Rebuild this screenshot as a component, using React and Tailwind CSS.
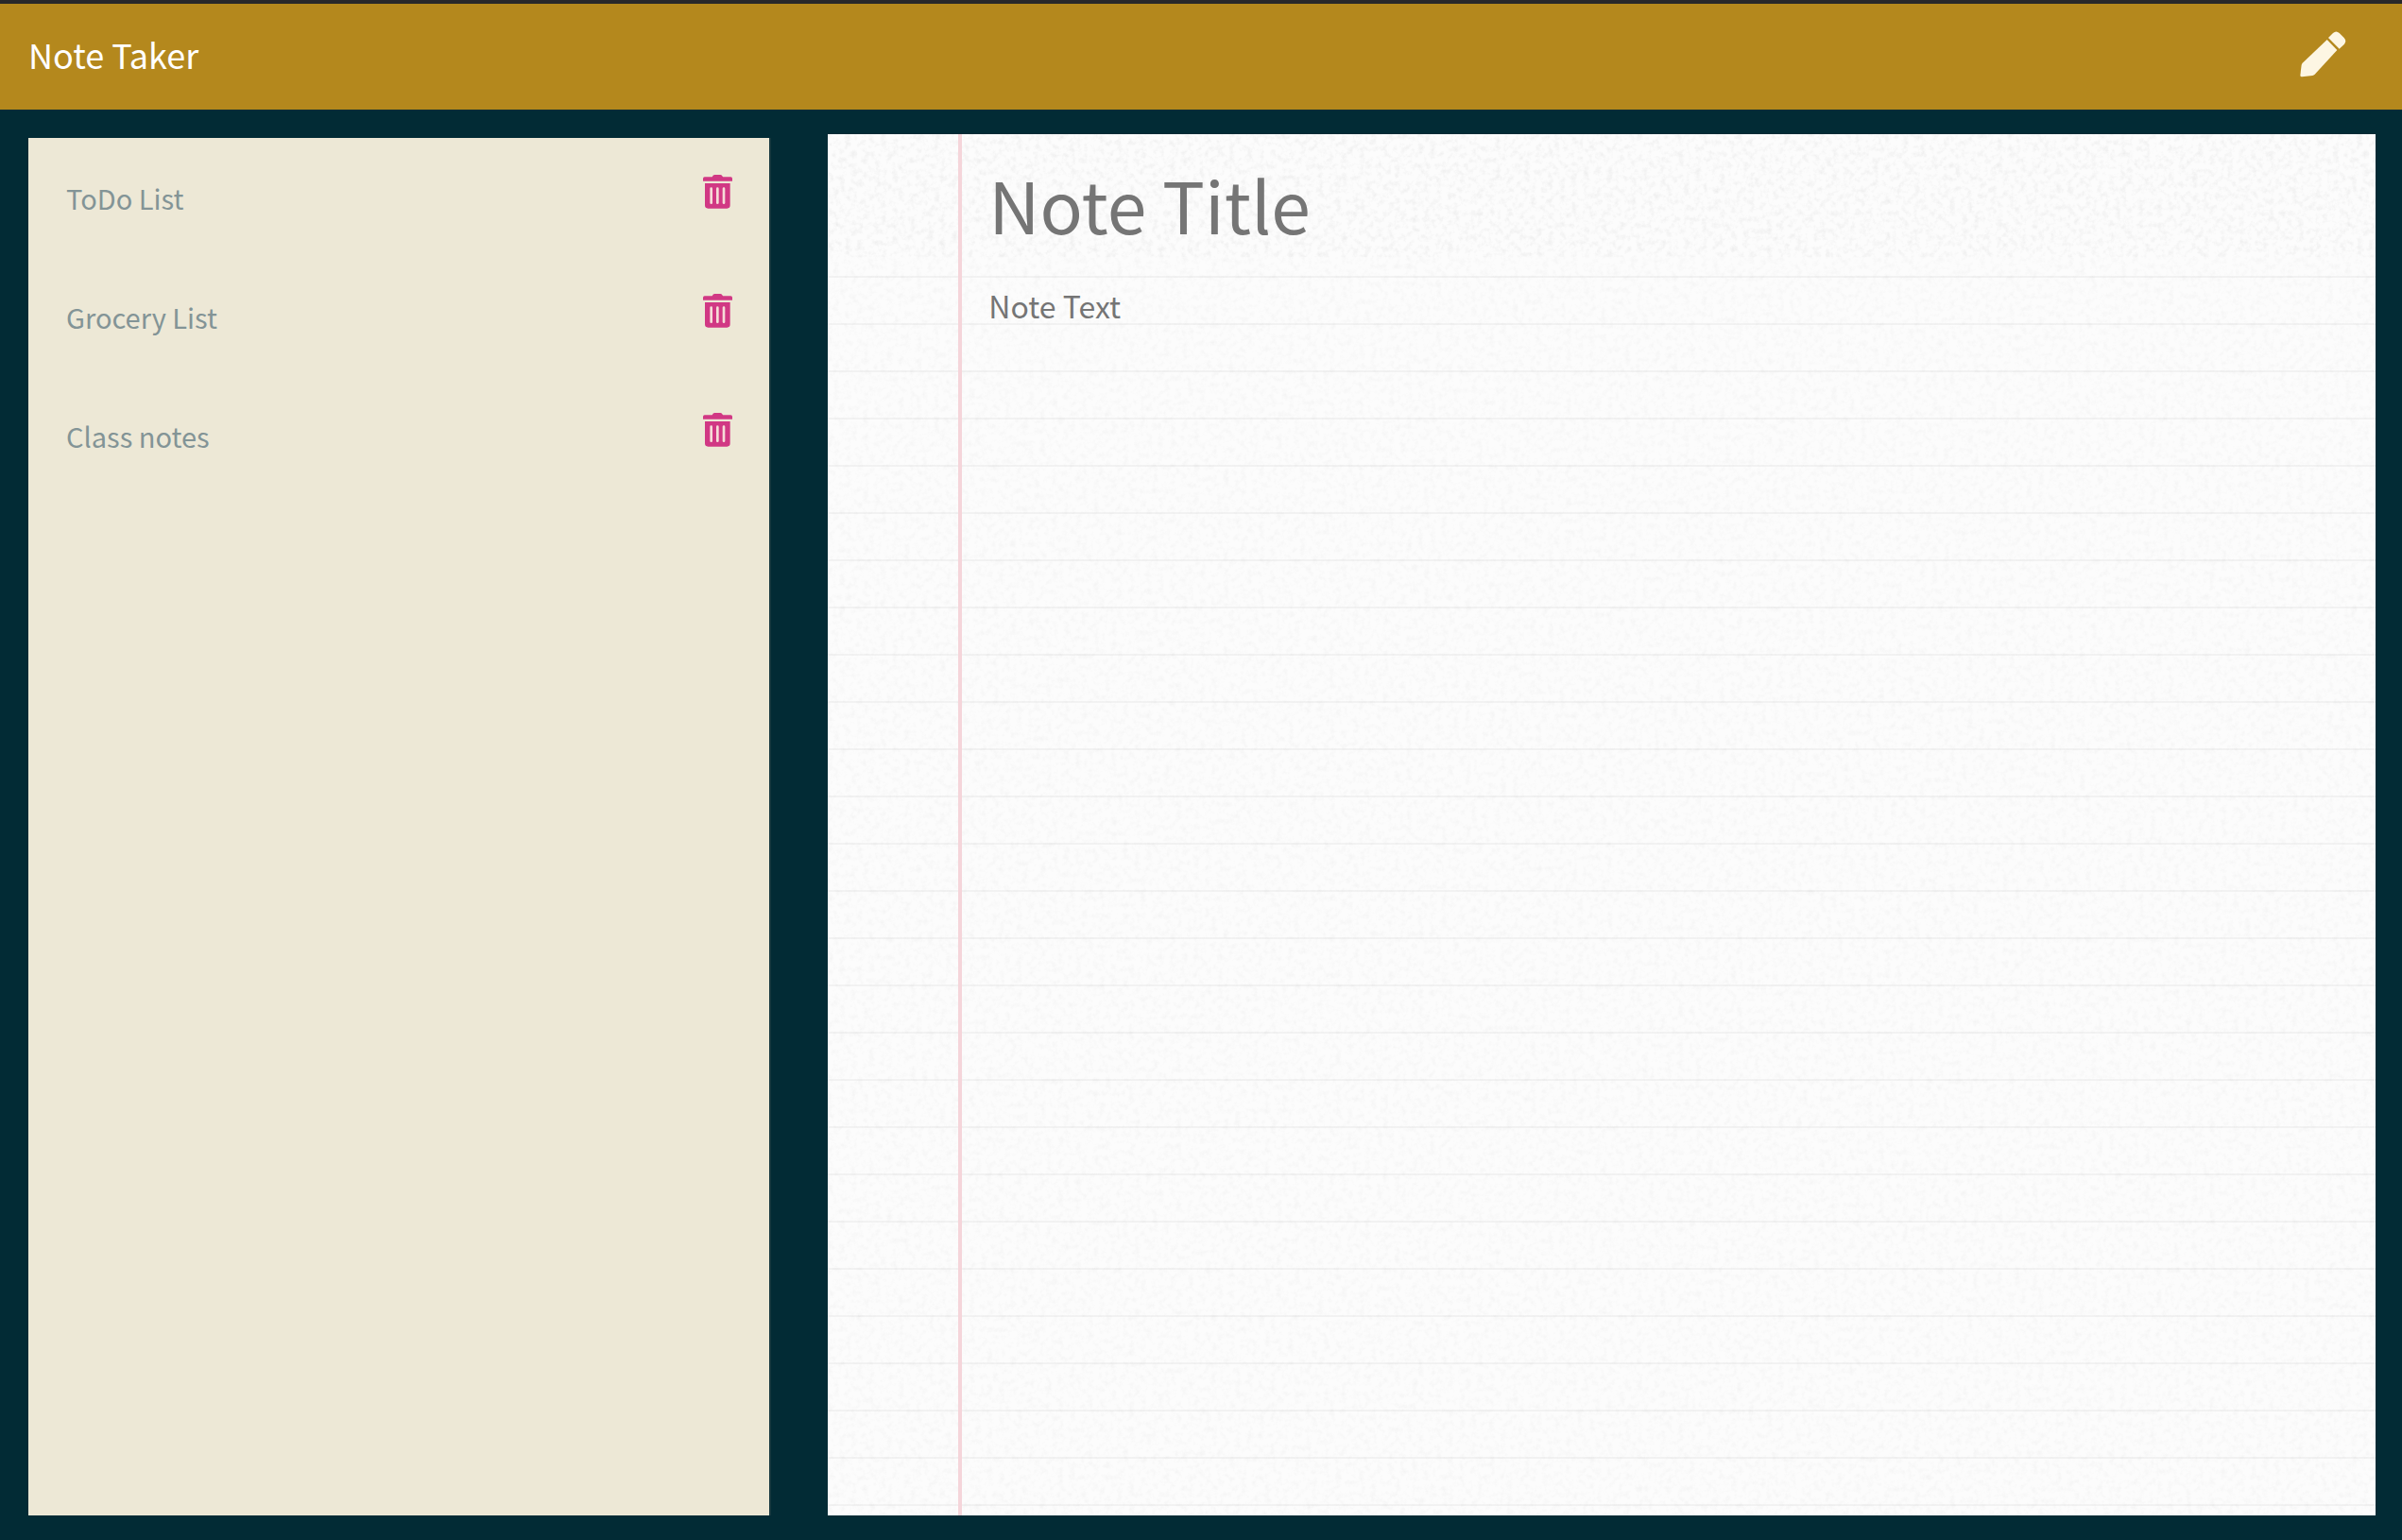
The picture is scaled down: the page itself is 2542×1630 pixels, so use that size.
const notes = ['ToDo List', 'Grocery List', 'Class notes'];

function PencilIcon() {
  return (
    <svg viewBox="0 0 147 147" className="size-[49px]" fill="currentColor" aria-hidden="true">
      <path d="M86 27 118 60 47 137Q44 140 40 141L6 145Q1 145 1 140L5 107Q6 104 8 101Z" />
      <path d="M90 21 105 6Q115-3 125 6L140 21Q149 31 141 41L125 56Z" />
    </svg>
  );
}

function TrashIcon() {
  return (
    <svg viewBox="0 0 93 108" className="h-9 w-[31px]" aria-hidden="true">
      <path
        fill="#d13884"
        d="M5 7H29Q32 0 37 0H55Q60 0 63 7H88Q93 7 93 12V20H0V12Q0 7 5 7ZM6 27H86V97Q86 107 76 107H16Q6 107 6 97Z"
      />
      <g fill="#f6dcd8">
        <rect x="22" y="40" width="8" height="53" rx="4" />
        <rect x="42" y="40" width="8" height="53" rx="4" />
        <rect x="62" y="40" width="8" height="53" rx="4" />
      </g>
    </svg>
  );
}

function PaperGrain() {
  return (
    <svg className="pointer-events-none absolute inset-0 h-full w-full" aria-hidden="true">
      <filter id="grain" x="0" y="0" width="100%" height="100%">
        <feTurbulence type="fractalNoise" baseFrequency="0.16" numOctaves="3" seed="4" />
        <feColorMatrix values="0 0 0 0 0.45  0 0 0 0 0.45  0 0 0 0 0.45  0.6 0 0 0 -0.27" />
      </filter>
      <rect width="100%" height="100%" filter="url(#grain)" opacity="0.36" />
      <rect width="100%" height="130" filter="url(#grain)" opacity="0.3" />
    </svg>
  );
}

export default function App() {
  return (
    <div className="flex min-h-screen flex-col bg-[#022b35] font-['Noto_Sans_CJK_SC',sans-serif]">
      <header className="flex h-[116px] items-center justify-between border-t-4 border-[#28282a] bg-[#b4881d] pb-1.5 pl-[30px] pr-[59px]">
        <a href="#" className="text-4xl text-white">Note Taker</a>
        <button type="button" aria-label="New note" className="text-[#fdf6e3]">
          <PencilIcon />
        </button>
      </header>

      <main className="flex flex-1 pb-[26px]">
        <aside className="flex w-1/3 shrink-0 pl-[30px] pr-[31px] pt-[30px]">
          <ul className="flex-1 border-r-2 border-[#17383f] bg-[#ede8d6]">
            {notes.map((note) => (
              <li key={note} className="flex h-[126px] items-start justify-between pl-10 pr-[39px] pt-[39px]">
                <button type="button" className="mt-1 text-[29px] leading-10 text-[#839496]">{note}</button>
                <button type="button" aria-label={`Delete ${note}`}>
                  <TrashIcon />
                </button>
              </li>
            ))}
          </ul>
        </aside>

        <section className="flex flex-1 pl-[29px] pr-7 pt-[26px]">
          <div className="relative flex flex-1 flex-col bg-[#fcfcfc]">
            <PaperGrain />
            <div className="pointer-events-none absolute inset-x-0 bottom-0 top-[150px] bg-[repeating-linear-gradient(to_bottom,#0000000a_0px,#0000000a_2px,transparent_2px,transparent_50px)]" />
            <div className="pointer-events-none absolute inset-y-0 left-[138px] w-1 bg-[#f5d5da]" />
            <input
              type="text"
              aria-label="Note title"
              placeholder="Note Title"
              className="relative h-[150px] bg-transparent pb-1 pl-[170px] pr-10 text-[75px] text-[#757575] outline-none placeholder:text-[#757575]"
            />
            <textarea
              aria-label="Note text"
              placeholder="Note Text"
              className="relative flex-1 resize-none bg-transparent pl-[170px] pr-10 pt-1.5 text-[32px] leading-[50px] text-[#757575] outline-none placeholder:text-[#757575]"
            />
          </div>
        </section>
      </main>
    </div>
  );
}
